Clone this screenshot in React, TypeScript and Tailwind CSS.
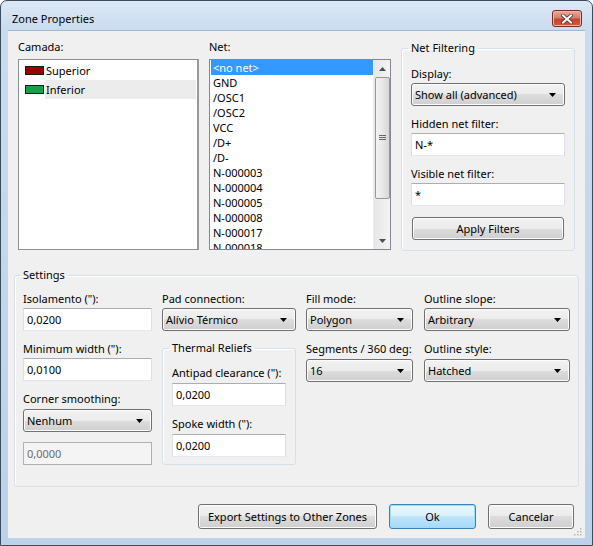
import React from "react";

const F = "font-['Noto_Sans',sans-serif]";

function Arrow() {
  return (
    <svg width="7" height="4" viewBox="0 0 7 4" className="shrink-0">
      <path d="M0 0H7L3.5 4Z" fill="#000" />
    </svg>
  );
}

function Combo({ text, className }: { text: string; className: string }) {
  return (
    <div
      className={`flex items-center justify-between pl-[3px] pr-[8px] border border-[#707070] rounded-[3px] bg-[linear-gradient(#f2f2f2,#ebebeb_50%,#dddddd_50%,#cfcfcf)] shadow-[inset_0_0_0_1px_#fcfcfc] text-[11px] leading-[16px] text-black ${className}`}
    >
      <span>{text}</span>
      <Arrow />
    </div>
  );
}

function Input({ text, className, disabled }: { text: string; className: string; disabled?: boolean }) {
  return (
    <div
      className={`flex items-center px-[3px] border text-[11px] leading-[16px] ${
        disabled
          ? "border-[#adb2b5] bg-[#f4f4f4] text-[#6d6d6d]"
          : "border-t-[#abadb3] border-x-[#dbdfe6] border-b-[#e3e9ef] bg-white text-black"
      } ${className}`}
    >
      {text}
    </div>
  );
}

function Label({ children, className = "" }: { children: React.ReactNode; className?: string }) {
  return <div className={`text-[11px] leading-[16px] text-black whitespace-nowrap ${className}`}>{children}</div>;
}

function Button({ text, className, def }: { text: string; className: string; def?: boolean }) {
  return (
    <div
      className={`flex items-center justify-center rounded-[3px] border text-[11px] leading-[16px] text-black ${
        def
          ? "border-[#3c7fb1] bg-[linear-gradient(#eaf6fd,#d9f0fc_50%,#bee6fd_50%,#a7d9f5)] shadow-[inset_0_0_0_1px_#9fdcf9]"
          : "border-[#707070] bg-[linear-gradient(#f2f2f2,#ebebeb_50%,#dddddd_50%,#cfcfcf)] shadow-[inset_0_0_0_1px_#fcfcfc]"
      } ${className}`}
    >
      {text}
    </div>
  );
}

const nets = [
  "<no net>",
  "GND",
  "/OSC1",
  "/OSC2",
  "VCC",
  "/D+",
  "/D-",
  "N-000003",
  "N-000004",
  "N-000005",
  "N-000008",
  "N-000017",
  "N-000018",
];

export default function App() {
  return (
    <div className={`w-[593px] h-[546px] ${F} bg-white`}>
      <div className="relative w-[593px] h-[546px] flex flex-col rounded-t-[7px] border border-[#3b4c5e] bg-[linear-gradient(#dce8f5,#c9dbef_30px,#bcd2ea)] overflow-hidden">
        {/* title bar */}
        <div className="h-[29px] flex items-start justify-between shrink-0">
          <div className="pl-[11px] pt-[10px] text-[11px] leading-[16px] text-black">Zone Properties</div>
          <div className="mt-[9px] mr-[10px] w-[30px] h-[17px] rounded-[3px] border border-[#7a2a22] bg-[linear-gradient(#e9a99b,#d47f6c_45%,#c4432f_55%,#d05a3e)] shadow-[inset_0_0_0_1px_#f0b6a8] flex items-center justify-center">
            <svg width="12" height="10" viewBox="0 0 12 10">
              <path d="M2 1.5L10 8.5M10 1.5L2 8.5" stroke="#5a3030" strokeWidth="3.6" strokeLinecap="square" />
              <path d="M2 1.5L10 8.5M10 1.5L2 8.5" stroke="#ffffff" strokeWidth="2" strokeLinecap="square" />
            </svg>
          </div>
        </div>

        {/* client */}
        <div className="relative mx-[7px] h-[508px] bg-[#f0f0f0] border-t border-[#a3b8cf] flex flex-col">
          {/* top row */}
          <div className="flex pl-[10px] pt-[8px]">
            <div className="w-[181px] flex flex-col">
              <Label className="mb-[4px]">Camada:</Label>
              <div className="h-[191px] bg-white border border-[#8e8f8f] border-r-[2px] border-r-[#9a9a9a] pt-[1px]">
                <div className="flex items-center h-[19px]">
                  <div className="ml-[6px] w-[19px] h-[9px] bg-[#990000] border border-[#1a1a1a]" />
                  <div className="ml-[2px] text-[11px] leading-[16px] text-black">Superior</div>
                </div>
                <div className="flex items-center h-[19px]">
                  <div className="ml-[6px] w-[19px] h-[9px] bg-[#14a14a] border border-[#1a1a1a]" />
                  <div className="ml-[1px] flex-1 h-[19px] bg-[#ececec] flex items-center pl-[1px] text-[11px] leading-[16px] text-black mr-[1px]">
                    Inferior
                  </div>
                </div>
              </div>
            </div>

            <div className="ml-[10px] w-[182px] flex flex-col">
              <Label className="mb-[4px]">Net:</Label>
              <div className="h-[191px] bg-white border border-[#828790] flex overflow-hidden">
                <div className="flex-1 pl-[1px] overflow-hidden">
                  {nets.map((n, i) => (
                    <div
                      key={n}
                      className={`h-[15px] leading-[15px] text-[11px] pl-[2px] whitespace-nowrap ${
                        i === 0 ? "bg-[#3399ff] text-white" : "text-black"
                      }`}
                    >
                      {n}
                    </div>
                  ))}
                </div>
                <div className="w-[17px] bg-[linear-gradient(90deg,#e6e6e6,#f4f4f4)] flex flex-col items-center border-l border-[#ececec]">
                  <div className="h-[17px] flex items-center justify-center">
                    <svg width="7" height="4" viewBox="0 0 7 4">
                      <path d="M0 4H7L3.5 0Z" fill="#4d4d4d" />
                    </svg>
                  </div>
                  <div className="w-[15px] h-[122px] rounded-[2px] border border-[#979797] bg-[linear-gradient(90deg,#f3f3f3,#e8e8e8_50%,#d6d6d6)] flex items-center justify-center">
                    <svg width="7" height="6" viewBox="0 0 7 6">
                      <path d="M0 0.5H7M0 2.5H7M0 4.5H7" stroke="#666" strokeWidth="1" />
                    </svg>
                  </div>
                  <div className="flex-1" />
                  <div className="h-[17px] flex items-center justify-center">
                    <svg width="7" height="4" viewBox="0 0 7 4">
                      <path d="M0 0H7L3.5 4Z" fill="#4d4d4d" />
                    </svg>
                  </div>
                </div>
              </div>
            </div>

            <fieldset className="ml-[10px] mt-[1px] w-[174px] h-[211px] border border-[#d5dfe5] rounded-[3px] shadow-[inset_1px_1px_0_#fff] pl-[9px] flex flex-col">
              <legend className="-ml-[3px] px-[3px] text-[11px] leading-[16px] text-black">Net Filtering</legend>
              <Label className="mt-[10px]">Display:</Label>
              <Combo text="Show all (advanced)" className="mt-[1px] w-[154px] h-[23px]" />
              <Label className="mt-[10px]">Hidden net filter:</Label>
              <Input text="N-*" className="mt-[1px] w-[154px] h-[23px]" />
              <Label className="mt-[10px]">Visible net filter:</Label>
              <Input text="*" className="mt-[1px] w-[154px] h-[23px]" />
              <Button text="Apply Filters" className="mt-[11px] ml-[1px] w-[152px] h-[23px]" />
            </fieldset>
          </div>

          {/* settings */}
          <fieldset className="ml-[6px] mt-[16px] w-[565px] h-[220px] border border-[#d5dfe5] rounded-[3px] shadow-[inset_1px_1px_0_#fff] pl-[8px] flex">
            <legend className="-ml-[3px] px-[3px] text-[11px] leading-[16px] text-black">Settings</legend>
            <div className="w-[129px] flex flex-col pt-[8px]">
              <Label>Isolamento ("):</Label>
              <Input text="0,0200" className="mt-[1px] w-[129px] h-[23px]" />
              <Label className="mt-[10px]">Minimum width ("):</Label>
              <Input text="0,0100" className="mt-[1px] w-[129px] h-[23px]" />
              <Label className="mt-[10px]">Corner smoothing:</Label>
              <Combo text="Nenhum" className="mt-[2px] w-[129px] h-[23px]" />
              <Input text="0,0000" disabled className="mt-[10px] w-[129px] h-[23px]" />
            </div>
            <div className="ml-[10px] w-[134px] flex flex-col pt-[8px]">
              <Label>Pad connection:</Label>
              <Combo text="Alívio Térmico" className="mt-[1px] w-[134px] h-[23px]" />
              <fieldset className="mt-[9px] w-[134px] h-[125px] border border-[#d5dfe5] rounded-[3px] shadow-[inset_1px_1px_0_#fff] pl-[9px] flex flex-col">
                <legend className="-ml-[3px] px-[3px] text-[11px] leading-[16px] text-black">Thermal Reliefs</legend>
                <Label className="mt-[9px]">Antipad clearance ("):</Label>
                <Input text="0,0200" className="mt-[2px] w-[114px] h-[23px]" />
                <Label className="mt-[10px]">Spoke width ("):</Label>
                <Input text="0,0200" className="mt-[2px] w-[114px] h-[23px]" />
              </fieldset>
            </div>
            <div className="ml-[10px] w-[107px] flex flex-col pt-[8px]">
              <Label>Fill mode:</Label>
              <Combo text="Polygon" className="mt-[1px] w-[107px] h-[23px]" />
              <Label className="mt-[10px]">Segments / 360 deg:</Label>
              <Combo text="16" className="mt-[2px] w-[107px] h-[23px]" />
            </div>
            <div className="ml-[11px] w-[146px] flex flex-col pt-[8px]">
              <Label>Outline slope:</Label>
              <Combo text="Arbitrary" className="mt-[1px] w-[146px] h-[23px]" />
              <Label className="mt-[10px]">Outline style:</Label>
              <Combo text="Hatched" className="mt-[2px] w-[146px] h-[23px]" />
            </div>
          </fieldset>

          {/* buttons */}
          <div className="flex justify-end gap-[12px] pr-[11px] mt-[17px]">
            <Button text="Export Settings to Other Zones" className="w-[179px] h-[25px]" />
            <Button text="Ok" def className="w-[87px] h-[25px]" />
            <Button text="Cancelar" className="w-[86px] h-[25px]" />
          </div>

          <svg className="absolute right-[3px] bottom-[2px]" width="8" height="8" viewBox="0 0 8 8">
            <rect x="6" y="0" width="1.5" height="1.5" fill="#b8b8b8" />
            <rect x="3" y="3" width="1.5" height="1.5" fill="#b8b8b8" />
            <rect x="6" y="3" width="1.5" height="1.5" fill="#b8b8b8" />
            <rect x="0" y="6" width="1.5" height="1.5" fill="#b8b8b8" />
            <rect x="3" y="6" width="1.5" height="1.5" fill="#b8b8b8" />
            <rect x="6" y="6" width="1.5" height="1.5" fill="#b8b8b8" />
          </svg>
        </div>
      </div>
    </div>
  );
}
